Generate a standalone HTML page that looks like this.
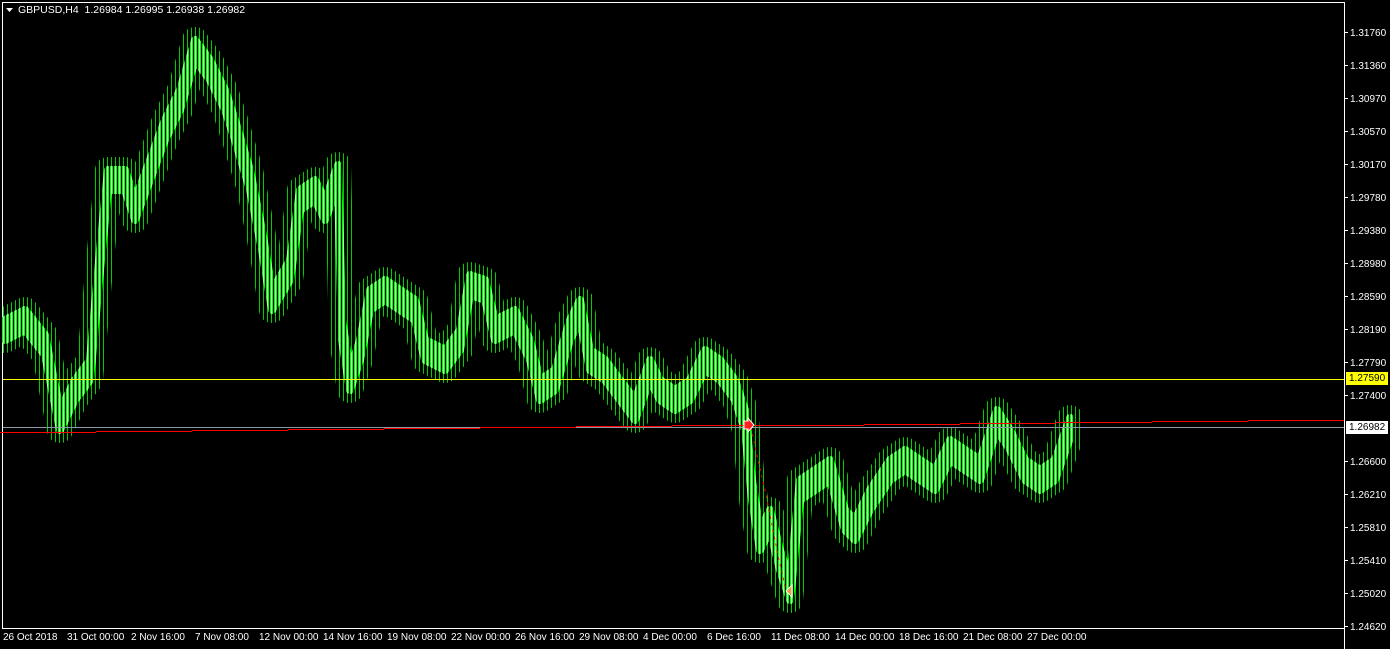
<!DOCTYPE html>
<html><head><meta charset="utf-8"><style>
body{margin:0;background:#000;width:1390px;height:649px;overflow:hidden;font-family:"Liberation Sans",Arial,sans-serif;font-size:10px;color:#fff;position:relative}
div{position:absolute}
.t{white-space:nowrap;line-height:12px}
</style></head><body>
<svg style="position:absolute;left:0;top:0" width="1390" height="649">
<defs>
<pattern id="b" x="6" y="0" width="4" height="4" patternUnits="userSpaceOnUse">
<rect x="0" y="0" width="1" height="4" fill="#00ff00"/><rect x="1" y="0" width="1" height="4" fill="#b8ffb8"/><rect x="2" y="0" width="1" height="4" fill="#00ff00"/>
</pattern>
<pattern id="w" x="6" y="0" width="4" height="4" patternUnits="userSpaceOnUse">
<rect x="1" y="0" width="1" height="4" fill="#00cc00"/>
</pattern>
<polygon id="pg" stroke-linejoin="round" points="5,320 25,310 45,335 60,410 75,380 90,360 100,250 108,170 125,170 135,200 150,160 165,120 180,90 195,40 210,60 225,90 235,120 250,170 262,230 272,290 290,260 300,190 315,180 325,200 338,165 342,320 350,370 360,340 370,290 385,280 400,290 415,300 425,340 445,350 460,330 470,275 485,280 495,320 515,310 530,340 540,380 555,370 570,320 580,300 590,350 605,360 620,380 635,400 650,360 660,380 675,390 690,380 705,350 720,360 735,380 745,410 752,480 760,530 770,510 780,550 790,580 800,480 815,470 830,460 845,510 855,520 870,490 890,460 905,450 920,460 935,470 950,440 965,450 980,460 997,410 1010,430 1025,460 1040,470 1055,460 1070,418 1070,438 1055,480 1040,490 1025,480 1010,450 997,430 980,480 965,470 950,460 935,490 920,480 905,470 890,480 870,510 855,540 845,530 830,480 815,490 800,500 790,600 780,570 770,530 760,550 752,500 745,430 735,400 720,380 705,370 690,400 675,410 660,400 650,380 635,420 620,400 605,380 590,370 580,320 570,340 555,390 540,400 530,360 515,330 495,340 485,300 470,295 460,350 445,370 425,360 415,320 400,310 385,300 370,310 360,360 350,390 342,340 338,185 325,220 315,200 300,210 290,280 272,310 262,250 250,190 235,140 225,110 210,80 195,60 180,110 165,140 150,180 135,220 125,190 108,190 100,270 90,380 75,400 60,430 45,355 25,330 5,340"/>
</defs>
<rect x="2" y="2" width="1" height="627" fill="#fff"/>
<rect x="2" y="2" width="1343" height="1" fill="#fff"/>
<rect x="2" y="628" width="1343" height="1" fill="#fff"/>
<rect x="1344" y="2" width="1" height="647" fill="#fff"/>
<use href="#pg" stroke="url(#w)" stroke-width="26" fill="none"/>
<use href="#pg" stroke="url(#b)" stroke-width="8" fill="url(#b)"/>
<rect x="3" y="379" width="1341" height="1" fill="#ffff00"/>
<rect x="3" y="427" width="1341" height="1" fill="#8a9aa8"/>
<g fill="#ff0000">
<rect x="0" y="432" width="96" height="1"/><rect x="96" y="431" width="96" height="1"/><rect x="192" y="430" width="96" height="1"/><rect x="288" y="429" width="96" height="1"/><rect x="384" y="428" width="96" height="1"/><rect x="480" y="427" width="96" height="1"/><rect x="576" y="426" width="96" height="1"/><rect x="672" y="425" width="96" height="1"/><rect x="768" y="425" width="96" height="1"/><rect x="864" y="424" width="96" height="1"/><rect x="960" y="423" width="96" height="1"/><rect x="1056" y="422" width="96" height="1"/><rect x="1152" y="421" width="96" height="1"/><rect x="1248" y="420" width="96" height="1"/>
</g>
<path d="M751 427 L758 460 L765 490 L772 525 L779 560 L786 590" stroke="#ff0000" stroke-dasharray="3,4" fill="none"/>
<path d="M744 421 h4 v-3 l6 7 l-6 7 v-3 h-4z" fill="#ff2020" stroke="#fff" stroke-width="1"/>
<path d="M786 591 l6 -6 v12z" fill="#e0a040" stroke="#fff"/>
<path d="M6 8 h7 l-3.5 4z" fill="#fff"/>
<g fill="#fff">
<rect x="1345" y="32" width="3" height="1"/><rect x="1345" y="65" width="3" height="1"/><rect x="1345" y="98" width="3" height="1"/><rect x="1345" y="131" width="3" height="1"/><rect x="1345" y="164" width="3" height="1"/><rect x="1345" y="197" width="3" height="1"/><rect x="1345" y="230" width="3" height="1"/><rect x="1345" y="263" width="3" height="1"/><rect x="1345" y="296" width="3" height="1"/><rect x="1345" y="329" width="3" height="1"/><rect x="1345" y="362" width="3" height="1"/><rect x="1345" y="395" width="3" height="1"/><rect x="1345" y="461" width="3" height="1"/><rect x="1345" y="494" width="3" height="1"/><rect x="1345" y="527" width="3" height="1"/><rect x="1345" y="560" width="3" height="1"/><rect x="1345" y="593" width="3" height="1"/><rect x="1345" y="626" width="3" height="1"/>
</g>
</svg>
<div class="t" style="left:18px;top:4px;font-size:10.5px">GBPUSD,H4&nbsp; 1.26984 1.26995 1.26938 1.26982</div>
<div class="t" style="left:1350px;top:28px">1.31760</div>
<div class="t" style="left:1350px;top:61px">1.31360</div>
<div class="t" style="left:1350px;top:94px">1.30970</div>
<div class="t" style="left:1350px;top:127px">1.30570</div>
<div class="t" style="left:1350px;top:160px">1.30170</div>
<div class="t" style="left:1350px;top:193px">1.29780</div>
<div class="t" style="left:1350px;top:226px">1.29380</div>
<div class="t" style="left:1350px;top:259px">1.28980</div>
<div class="t" style="left:1350px;top:292px">1.28590</div>
<div class="t" style="left:1350px;top:325px">1.28190</div>
<div class="t" style="left:1350px;top:358px">1.27790</div>
<div class="t" style="left:1350px;top:391px">1.27400</div>
<div class="t" style="left:1350px;top:457px">1.26600</div>
<div class="t" style="left:1350px;top:490px">1.26210</div>
<div class="t" style="left:1350px;top:523px">1.25810</div>
<div class="t" style="left:1350px;top:556px">1.25410</div>
<div class="t" style="left:1350px;top:589px">1.25020</div>
<div class="t" style="left:1350px;top:622px">1.24620</div>
<div style="left:1346px;top:372px;width:42px;height:13px;background:#ffff00"></div>
<div class="t" style="left:1349px;top:373px;color:#000">1.27590</div>
<div style="left:1346px;top:421px;width:42px;height:13px;background:#fff"></div>
<div class="t" style="left:1349px;top:422px;color:#000">1.26982</div>
<div class="t" style="left:3px;top:632px">26 Oct 2018</div>
<div class="t" style="left:67px;top:632px">31 Oct 00:00</div>
<div class="t" style="left:131px;top:632px">2 Nov 16:00</div>
<div class="t" style="left:195px;top:632px">7 Nov 08:00</div>
<div class="t" style="left:259px;top:632px">12 Nov 00:00</div>
<div class="t" style="left:323px;top:632px">14 Nov 16:00</div>
<div class="t" style="left:387px;top:632px">19 Nov 08:00</div>
<div class="t" style="left:451px;top:632px">22 Nov 00:00</div>
<div class="t" style="left:515px;top:632px">26 Nov 16:00</div>
<div class="t" style="left:579px;top:632px">29 Nov 08:00</div>
<div class="t" style="left:643px;top:632px">4 Dec 00:00</div>
<div class="t" style="left:707px;top:632px">6 Dec 16:00</div>
<div class="t" style="left:771px;top:632px">11 Dec 08:00</div>
<div class="t" style="left:835px;top:632px">14 Dec 00:00</div>
<div class="t" style="left:899px;top:632px">18 Dec 16:00</div>
<div class="t" style="left:963px;top:632px">21 Dec 08:00</div>
<div class="t" style="left:1027px;top:632px">27 Dec 00:00</div>
</body></html>
